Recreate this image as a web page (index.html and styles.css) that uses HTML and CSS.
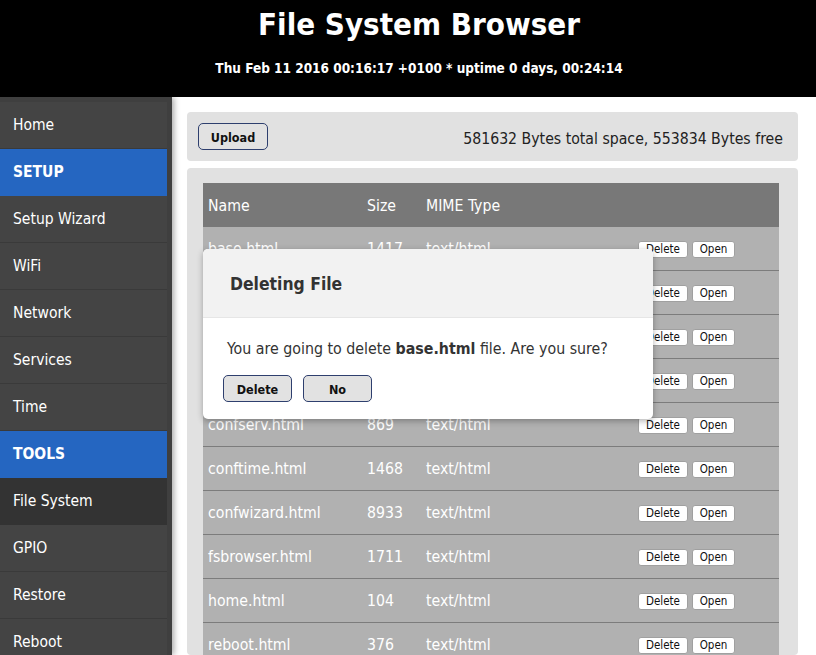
FILE: index.html
```html
<!DOCTYPE html>
<html>
<head>
<meta charset="utf-8">
<link rel="stylesheet" href="styles.css">
</head>
<body>
<header class="top">
  <h1 class="title">File System Browser</h1>
  <div class="status">Thu Feb 11 2016 00:16:17 +0100 * uptime 0 days, 00:24:14</div>
</header>
<div class="layout">
  <nav class="side">
    <div class="item">Home</div>
    <div class="item section">SETUP</div>
    <div class="item">Setup Wizard</div>
    <div class="item">WiFi</div>
    <div class="item">Network</div>
    <div class="item">Services</div>
    <div class="item">Time</div>
    <div class="item section">TOOLS</div>
    <div class="item active">File System</div>
    <div class="item">GPIO</div>
    <div class="item">Restore</div>
    <div class="item">Reboot</div>
  </nav>
  <main class="main">
    <div class="panel bar">
      <button class="btn">Upload</button>
      <span class="space">581632 Bytes total space, 553834 Bytes free</span>
    </div>
    <div class="panel list">
      <table class="files">
        <thead>
          <tr><th class="c-name">Name</th><th class="c-size">Size</th><th class="c-mime">MIME Type</th><th class="c-act"></th></tr>
        </thead>
        <tbody>
          <tr><td>base.html</td><td>1417</td><td>text/html</td><td><span class="sbtn del">Delete</span><span class="sbtn open">Open</span></td></tr>
          <tr><td>confap.html</td><td>1020</td><td>text/html</td><td><span class="sbtn del">Delete</span><span class="sbtn open">Open</span></td></tr>
          <tr><td>confgpio.html</td><td>1502</td><td>text/html</td><td><span class="sbtn del">Delete</span><span class="sbtn open">Open</span></td></tr>
          <tr><td>confnet.html</td><td>2730</td><td>text/html</td><td><span class="sbtn del">Delete</span><span class="sbtn open">Open</span></td></tr>
          <tr><td>confserv.html</td><td>869</td><td>text/html</td><td><span class="sbtn del">Delete</span><span class="sbtn open">Open</span></td></tr>
          <tr><td>conftime.html</td><td>1468</td><td>text/html</td><td><span class="sbtn del">Delete</span><span class="sbtn open">Open</span></td></tr>
          <tr><td>confwizard.html</td><td>8933</td><td>text/html</td><td><span class="sbtn del">Delete</span><span class="sbtn open">Open</span></td></tr>
          <tr><td>fsbrowser.html</td><td>1711</td><td>text/html</td><td><span class="sbtn del">Delete</span><span class="sbtn open">Open</span></td></tr>
          <tr><td>home.html</td><td>104</td><td>text/html</td><td><span class="sbtn del">Delete</span><span class="sbtn open">Open</span></td></tr>
          <tr><td>reboot.html</td><td>376</td><td>text/html</td><td><span class="sbtn del">Delete</span><span class="sbtn open">Open</span></td></tr>
        </tbody>
      </table>
    </div>
  </main>
</div>
<div class="modal">
  <div class="modal-head">Deleting File</div>
  <div class="modal-body">
    <p class="msg">You are going to delete <b>base.html</b> file. Are you sure?</p>
    <div class="actions">
      <button class="btn mbtn">Delete</button>
      <button class="btn mbtn">No</button>
    </div>
  </div>
</div>
</body>
</html>
```
FILE: styles.css
```css
html, body {
  margin: 0;
  padding: 0;
  height: 655px;
  overflow: hidden;
  background: #fff;
  font-family: "DejaVu Sans Condensed", "DejaVu Sans", sans-serif;
}
.top {
  background: #000;
  color: #fff;
  height: 97px;
  text-align: center;
  box-sizing: border-box;
  padding: 5px 0 0 22px;
}
.title {
  margin: 0;
  font-size: 31px;
  line-height: 38px;
  font-weight: bold;
}
.status {
  margin-top: 17px;
  font-size: 13.5px;
  font-weight: bold;
}
.layout {
  display: flex;
  height: 558px;
}
.side {
  width: 172px;
  flex: none;
  background: #3f3f3f;
  padding-top: 5px;
  box-shadow: 2px 0 6px rgba(0,0,0,0.35);
  position: relative;
  z-index: 1;
}
.item {
  width: 167px;
  height: 47px;
  line-height: 46px;
  box-sizing: border-box;
  padding-left: 13px;
  background: #444;
  color: #fff;
  font-size: 15.5px;
  border-bottom: 1px solid #3a3a3a;
}
.item.section {
  background: #2566c1;
  font-weight: bold;
  border-bottom-color: #2566c1;
}
.item.active {
  background: #333;
  border-bottom-color: #333;
}
.main {
  flex: 1;
  padding: 15px 18px 0 15px;
  display: flex;
  flex-direction: column;
  gap: 7px;
  min-height: 0;
}
.panel {
  background: #e1e1e1;
  border-radius: 4px;
}
.bar {
  flex: none;
  height: 49px;
  box-sizing: border-box;
  padding: 11px 15px 0 11px;
  display: flex;
  align-items: flex-start;
  justify-content: space-between;
}
.btn {
  font-family: inherit;
  font-weight: bold;
  font-size: 12.5px;
  color: #111;
  background: #e2e2e2;
  border: 1px solid #2e3f6e;
  border-radius: 5px;
  height: 27px;
  width: 70px;
  padding: 1px 0 0;
}
.space {
  font-size: 15.7px;
  color: #222;
  line-height: 31px;
}
.list {
  flex: 1;
  min-height: 0;
  padding: 15px 19px 0 16px;
}
.files {
  width: 100%;
  border-collapse: collapse;
  color: #fff;
  font-size: 15.7px;
}
.files th {
  background: #787878;
  font-weight: normal;
  text-align: left;
  height: 44px;
  padding: 0 0 0 5px;
}
.files td {
  background: #b1b1b1;
  height: 43px;
  padding: 0 0 0 5px;
  border-bottom: 1px solid #7c7c7c;
}
.c-name { width: 154px; }
.c-size { width: 54px; }
.c-mime { width: 207px; }
.sbtn {
  display: inline-block;
  box-sizing: border-box;
  text-align: center;
  background: #fff;
  color: #111;
  font-size: 11.5px;
  border-radius: 3px;
  border: 1px solid #a0a0a0;
  height: 17px;
  line-height: 15px;
  vertical-align: middle;
}
.sbtn.del { width: 50px; margin-right: 4px; }
.sbtn.open { width: 43px; }
.modal {
  position: absolute;
  left: 203px;
  top: 249px;
  width: 450px;
  height: 170px;
  background: #fff;
  border-radius: 5px;
  overflow: hidden;
  box-shadow: 0 2px 6px rgba(0,0,0,0.3);
}
.modal-head {
  background: #f2f2f2;
  height: 69px;
  line-height: 70px;
  box-sizing: border-box;
  border-bottom: 1px solid #e6e6e6;
  padding-left: 27px;
  font-weight: bold;
  font-size: 17.4px;
  color: #333;
}
.modal-body {
  padding: 21px 0 0 20px;
}
.msg {
  margin: 0 0 0 4px;
  font-size: 15.8px;
  color: #333;
  line-height: 20px;
}
.actions {
  margin-top: 16px;
  display: flex;
  gap: 11px;
}
.mbtn {
  width: 69px;
}
```
